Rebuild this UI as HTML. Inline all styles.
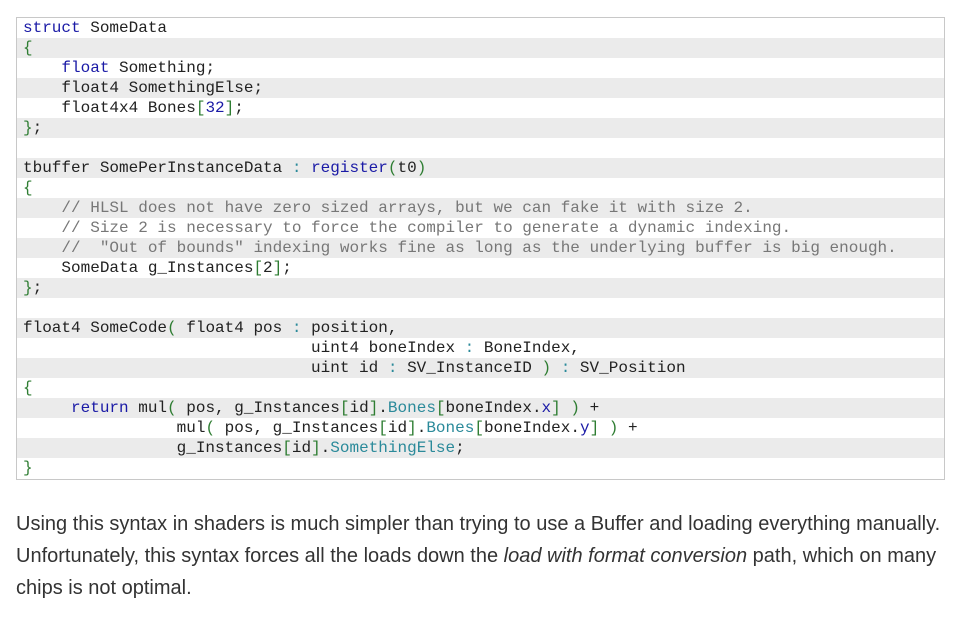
<!DOCTYPE html>
<html><head><meta charset="utf-8"><style>
body{margin:0;background:#fff;width:960px;height:625px;overflow:hidden}
.code{position:absolute;left:16px;top:17px;width:927px;height:461px;border:1px solid #c8c8c8;background:#fff}
.l{height:20px;line-height:20px;padding-left:6px;font-family:"Liberation Mono",monospace;font-size:16px;color:#222;white-space:pre}
.l:nth-child(even){background:#ebebeb}
.k{color:#1a1aa6}.g{color:#2e7d32}.c{color:#777}.t{color:#2b8a9a}
p{position:absolute;left:16px;top:508px;margin:0;width:940px;font-family:"Liberation Sans",Arial,sans-serif;font-size:20px;line-height:32px;color:#333}
</style></head><body>
<div class="code">
<div class="l"><span class="k">struct</span> SomeData</div>
<div class="l"><span class="g">{</span></div>
<div class="l">    <span class="k">float</span> Something;</div>
<div class="l">    float4 SomethingElse;</div>
<div class="l">    float4x4 Bones<span class="g">[</span><span class="k">32</span><span class="g">]</span>;</div>
<div class="l"><span class="g">}</span>;</div>
<div class="l"> </div>
<div class="l">tbuffer SomePerInstanceData <span class="t">:</span> <span class="k">register</span><span class="g">(</span>t0<span class="g">)</span></div>
<div class="l"><span class="g">{</span></div>
<div class="l"><span class="c">    // HLSL does not have zero sized arrays, but we can fake it with size 2.</span></div>
<div class="l"><span class="c">    // Size 2 is necessary to force the compiler to generate a dynamic indexing.</span></div>
<div class="l"><span class="c">    //  "Out of bounds" indexing works fine as long as the underlying buffer is big enough.</span></div>
<div class="l">    SomeData g_Instances<span class="g">[</span>2<span class="g">]</span>;</div>
<div class="l"><span class="g">}</span>;</div>
<div class="l"> </div>
<div class="l">float4 SomeCode<span class="g">(</span> float4 pos <span class="t">:</span> position,</div>
<div class="l">                              uint4 boneIndex <span class="t">:</span> BoneIndex,</div>
<div class="l">                              uint id <span class="t">:</span> SV_InstanceID <span class="g">)</span> <span class="t">:</span> SV_Position</div>
<div class="l"><span class="g">{</span></div>
<div class="l">     <span class="k">return</span> mul<span class="g">(</span> pos, g_Instances<span class="g">[</span>id<span class="g">]</span>.<span class="t">Bones</span><span class="g">[</span>boneIndex.<span class="k">x</span><span class="g">]</span> <span class="g">)</span> +</div>
<div class="l">                mul<span class="g">(</span> pos, g_Instances<span class="g">[</span>id<span class="g">]</span>.<span class="t">Bones</span><span class="g">[</span>boneIndex.<span class="k">y</span><span class="g">]</span> <span class="g">)</span> +</div>
<div class="l">                g_Instances<span class="g">[</span>id<span class="g">]</span>.<span class="t">SomethingElse</span>;</div>
<div class="l"><span class="g">}</span></div>
</div>
<p>Using this syntax in shaders is much simpler than trying to use a Buffer and loading everything manually. Unfortunately, this syntax forces all the loads down the <i>load with format conversion</i> path, which on many chips is not optimal.</p>
</body></html>
